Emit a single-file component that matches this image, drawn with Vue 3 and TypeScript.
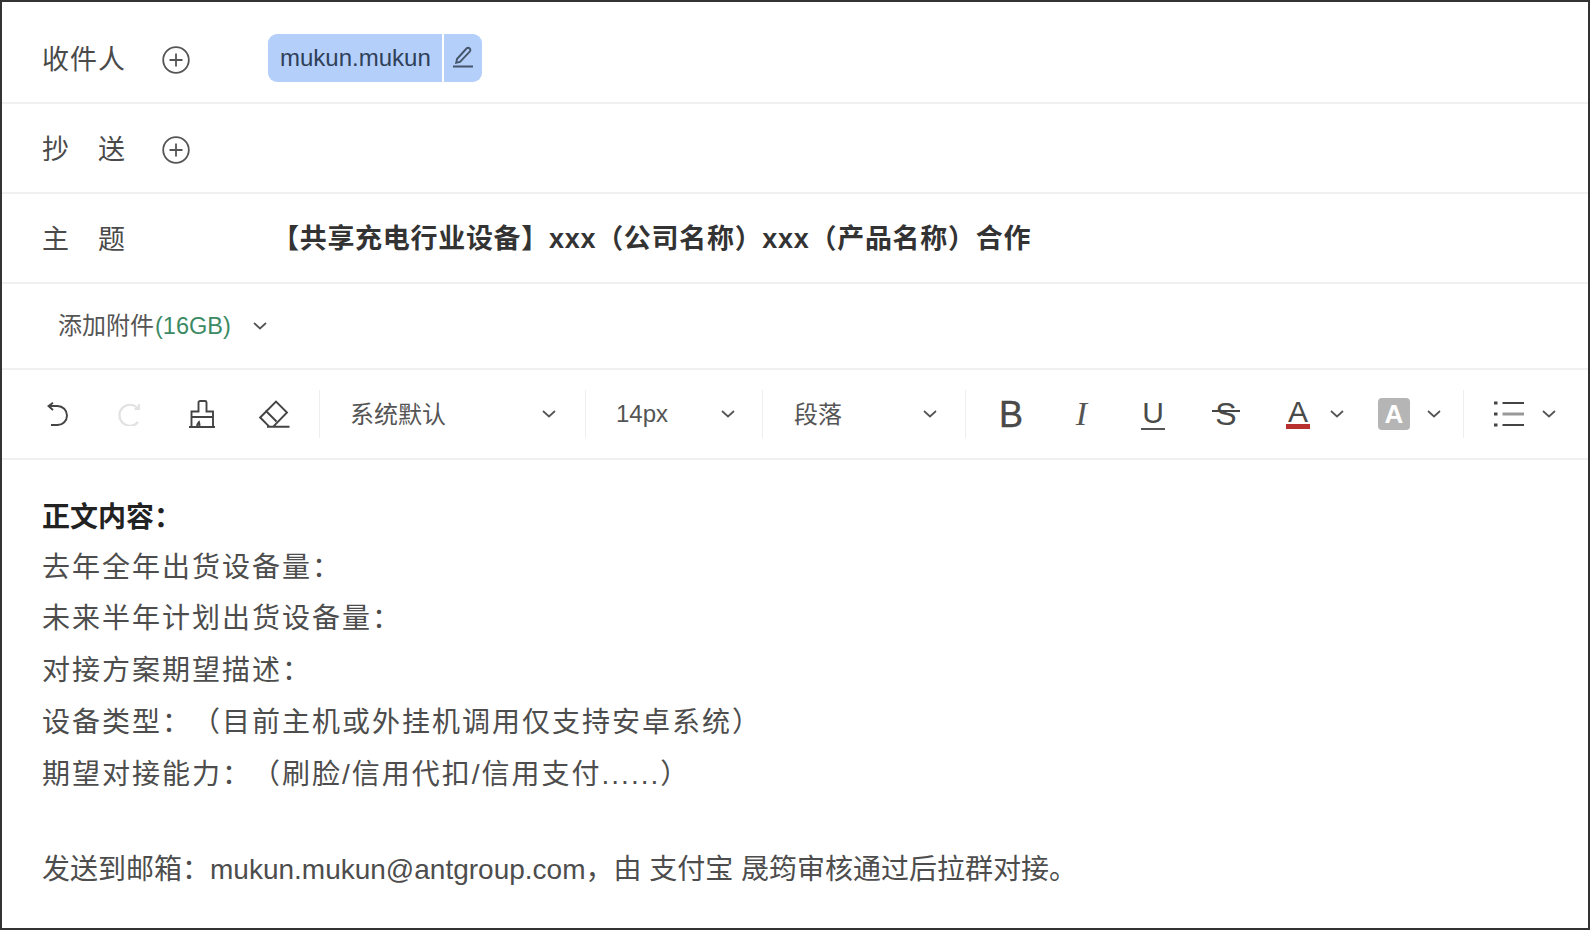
<script setup lang="ts">
const lines: string[] = [
  '去年全年出货设备量：',
  '未来半年计划出货设备量：',
  '对接方案期望描述：',
  '设备类型：（目前主机或外挂机调用仅支持安卓系统）',
  '期望对接能力：（刷脸/信用代扣/信用支付......）',
]
</script>

<template>
  <div class="mail">
    <div class="row row-to">
      <div class="label">收件人</div>
      <svg class="plus" viewBox="0 0 28 28"><circle cx="14" cy="14" r="12.8"/><path d="M14 7.5v13M7.5 14h13"/></svg>
      <div class="chip">
        <span class="chip-name">mukun.mukun</span>
        <span class="chip-edit">
          <svg width="22" height="24" viewBox="0 0 22 24"><path d="M5 15 14.500 4.500c.9-.9 2.300-.9 3.200 0s.9 2.300 0 3.200L8 18l-3.800.8zM1 22.500h20"/></svg>
        </span>
      </div>
    </div>
    <div class="row">
      <div class="label"><span>抄</span><span>送</span></div>
      <svg class="plus" viewBox="0 0 28 28"><circle cx="14" cy="14" r="12.8"/><path d="M14 7.5v13M7.5 14h13"/></svg>
    </div>
    <div class="row">
      <div class="label"><span>主</span><span>题</span></div>
      <span></span>
      <div class="subject">【共享充电行业设备】xxx（公司名称）xxx（产品名称）合作</div>
    </div>
    <div class="row-attach">
      <span class="cjk">添加附件</span><span class="size">(16GB)</span>
      <svg class="chev chev-attach" viewBox="0 0 14 8"><path d="m1 1 6 5.500L13 1"/></svg>
    </div>
    <div class="toolbar">
      <svg class="tool undo" width="22" height="24" viewBox="0 0 22 24"><path d="M1.500 4h9a9.500 9.500 0 0 1 0 19H4"/><path d="M6 .8 1.500 4 6 8"/></svg>
      <svg class="tool redo" width="22" height="24" viewBox="0 0 22 24"><path d="M20 6.500A10.500 10.500 0 1 0 20 20"/><path d="M21 2v5h-4.500"/></svg>
      <svg class="tool brush" width="26" height="28" viewBox="0 0 26 28"><path d="M9.500 11.500V2.500C9.500 1.500 10.300 1 11 1h5c.8 0 1.500.5 1.500 1.500v9H24V27H2.500V11.500zM2.500 17H24M0 27h26M8 27c0-2 .5-3.500 2-5 .6 1.500.6 3.500.5 5"/></svg>
      <svg class="tool eraser" width="31" height="28" viewBox="0 0 31 28"><path d="M10.500 26.800 1.200 17.500 17 1.500 28 12.500 14 26.800M6.500 10.500l11 11M8 26.800h22.500"/></svg>
      <i class="sep"></i>
      <div class="select s1"><span class="cjk">系统默认</span><svg class="chev" viewBox="0 0 14 8"><path d="m1 1 6 5.500L13 1"/></svg></div>
      <i class="sep"></i>
      <div class="select s2"><span>14px</span><svg class="chev" viewBox="0 0 14 8"><path d="m1 1 6 5.500L13 1"/></svg></div>
      <i class="sep"></i>
      <div class="select s3"><span class="cjk">段落</span><svg class="chev" viewBox="0 0 14 8"><path d="m1 1 6 5.500L13 1"/></svg></div>
      <i class="sep"></i>
      <span class="fmt bold">B</span>
      <span class="fmt italic">I</span>
      <span class="fmt under">U</span>
      <span class="fmt strike">S</span>
      <span class="fmt color">A</span>
      <svg class="chev chev-color" viewBox="0 0 14 8"><path d="m1 1 6 5.500L13 1"/></svg>
      <span class="fmt mark">A</span>
      <svg class="chev chev-mark" viewBox="0 0 14 8"><path d="m1 1 6 5.500L13 1"/></svg>
      <i class="sep sep-list"></i>
      <svg class="tool list" width="30" height="26" viewBox="0 0 30 26"><path class="dots" d="M0 2h3.500M0 13h3.500M0 24h3.500"/><path d="M8.500 2H30M8.500 24H30"/><path class="mid" d="M8.500 13H30"/></svg>
      <svg class="chev chev-list" viewBox="0 0 14 8"><path d="m1 1 6 5.500L13 1"/></svg>
    </div>
    <div class="body">
      <p class="strong">正文内容：</p>
      <p v-for="line in lines" :key="line" class="wide">{{ line }}</p>
      <p class="blank"></p>
      <p>发送到邮箱：mukun.mukun@antgroup.com，由 支付宝 晟筠审核通过后拉群对接。</p>
    </div>
  </div>
</template>

<style>
html, body { margin: 0; background: #fff; }
</style>

<style scoped>
.mail {
  box-sizing: border-box;
  width: 1590px;
  height: 930px;
  border: 2px solid #333;
  overflow: hidden;
  font-family: "Liberation Sans", "Noto Sans CJK SC", sans-serif;
  color: #555;
}
.row {
  box-sizing: border-box;
  height: 90px;
  padding-left: 40px;
  display: grid;
  grid-template-columns: 120px 106px 1fr;
  align-items: center;
  border-bottom: 2px solid #f0f0f0;
}
.row-to { height: 102px; padding-top: 11px; }
.label {
  width: 84px;
  display: flex;
  justify-content: space-between;
  white-space: nowrap;
  font-size: 27px;
  letter-spacing: 1px;
  color: #4a4a4a;
  margin-bottom: 2px;
}
.row-to .label { margin-bottom: 0; }
.plus { width: 28px; height: 28px; margin-top: 4px; fill: none; stroke: #555; stroke-width: 1.8; }
.chip {
  display: flex;
  width: 214px;
  height: 48px;
  border-radius: 9px;
  overflow: hidden;
  gap: 2px;
  color: #2f4058;
  font-size: 24px;
}
.chip-name {
  flex: 1;
  background: #b4cffa;
  padding-left: 12px;
  line-height: 47px;
}
.chip-edit {
  width: 38px;
  background: #b4cffa;
  display: flex;
  align-items: center;
  justify-content: center;
  padding-bottom: 4px;
  box-sizing: border-box;
}
.chip-edit svg { fill: none; stroke: #46566c; stroke-width: 1.900; }
.subject {
  padding-left: 4px;
  margin-bottom: 4px;
  font-size: 27px;
  letter-spacing: 0.700px;
  font-weight: 700;
  color: #333;
}
.row-attach {
  box-sizing: border-box;
  height: 86px;
  padding-left: 56px;
  display: flex;
  align-items: center;
  font-size: 24px;
  color: #555;
  border-bottom: 2px solid #f0f0f0;
}
.cjk { margin-bottom: 3px; }
.row-attach .cjk { margin-bottom: 5px; }
.size { color: #3c8a64; font-size: 23.500px; margin-left: 1px; }
.chev { width: 14px; height: 8px; flex: none; fill: none; stroke: #555; stroke-width: 1.700; }
.chev-attach { margin-left: 22px; }
.toolbar {
  box-sizing: border-box;
  height: 90px;
  padding-left: 45px;
  display: flex;
  align-items: center;
  border-bottom: 2px solid #f0f0f0;
  font-size: 24px;
  color: #555;
}
.tool { flex: none; fill: none; stroke: #444; stroke-width: 1.900; }
.redo { margin-left: 49px; stroke: #e2e2e2; stroke-width: 2.200; }
.brush { margin-left: 49px; }
.eraser { margin-left: 44px; }
.sep { flex: none; width: 1px; height: 48px; background: #eee; margin-left: 29px; }
.select + .sep { margin-left: 0; }
.select {
  box-sizing: border-box;
  display: flex;
  align-items: center;
  justify-content: space-between;
  flex: none;
}
.s1 { width: 265px; padding: 0 29px 0 30px; }
.s2 { width: 176px; padding: 0 27px 0 30px; }
.s3 { width: 202px; padding: 0 28px 0 31px; }
.fmt { flex: none; line-height: 1; color: #4a4a4a; text-align: center; }
.bold { font-size: 36px; margin: 2px 0 0 33px; width: 22px; -webkit-text-stroke: 0.4px #444; }
.italic { font-family: "Liberation Serif", serif; font-style: italic; font-size: 34px; margin-left: 52px; width: 17px; color: #555; }
.under {
  font-size: 30px;
  margin-left: 51px;
  width: 24px;
  height: 29px;
  line-height: 28px;
  border-bottom: 2px solid #555;
}
.strike { position: relative; font-size: 32px; margin-left: 47px; width: 28px; }
.strike::after {
  content: "";
  position: absolute;
  left: 0;
  right: 0;
  top: 12px;
  height: 2px;
  background: #444;
}
.color {
  font-size: 30px;
  margin-left: 46px;
  width: 24px;
  height: 25px;
  line-height: 25px;
  border-bottom: 5px solid #b8312f;
}
.chev-color { margin-left: 20px; }
.mark {
  margin-left: 34px;
  width: 32px;
  height: 32px;
  line-height: 32px;
  border-radius: 4px;
  background: #b5b5b5;
  color: #fff;
  font-size: 26px;
  font-weight: 700;
}
.chev-mark { margin-left: 17px; }
.sep-list { margin-left: 22px; }
.list { margin-left: 30px; }
.list .dots { stroke-width: 3; }
.list .mid { stroke: #999; stroke-width: 3; }
.chev-list { margin-left: 18px; }
.body {
  padding: 32px 0 0 40px;
  font-size: 28px;
  color: #4d4d4d;
  text-spacing-trim: space-all;
}
.body p { margin: 0; height: 51.800px; line-height: 51.800px; white-space: nowrap; }
.body .strong { height: 49.500px; font-weight: 700; color: #222; }
.wide { letter-spacing: 2px; }
.body .blank { height: 44px; }
</style>
